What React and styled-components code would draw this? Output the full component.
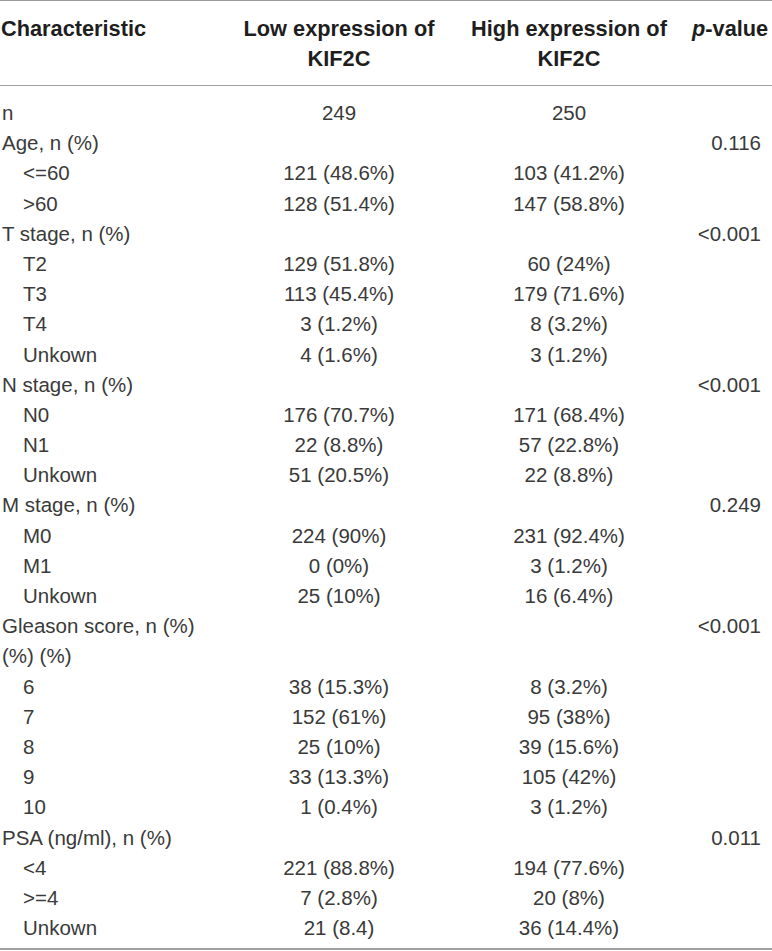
import React from 'react';
import styled, { createGlobalStyle } from 'styled-components';

const GlobalStyle = createGlobalStyle`
  html, body {
    margin: 0;
    padding: 0;
    background: #ffffff;
  }
  body {
    font-family: "Liberation Sans", Arial, Helvetica, sans-serif;
  }
`;

// table frame with the top and bottom rules
const Table = styled.div`
  width: 772px;
  border-top: 1px solid #9a9a9a;
  border-bottom: 2px solid #a0a0a0;
`;

const columns = '230px 218px 242px 1fr';

// header block
const Head = styled.div`
  display: grid;
  grid-template-columns: ${columns};
  padding: 12.5px 0 11.5px;
  border-bottom: 1px solid #a0a0a0;
  margin-bottom: 12px;
`;

const HeadCell = styled.div`
  font-weight: bold;
  font-size: 21.75px;
  line-height: 30px;
  color: #1e1e1e;
  text-align: ${(p) => p.$align || 'left'};
  padding-left: ${(p) => p.$pad || 0}px;
  white-space: nowrap;
`;

const Row = styled.div`
  display: grid;
  grid-template-columns: ${columns};
  height: 30.2px;
  font-size: 20.5px;
  line-height: 30.2px;
  color: #3a3a3a;
`;

const Label = styled.div`
  padding-left: ${(p) => (p.$sub ? 23 : 2)}px;
  white-space: nowrap;
`;

const Value = styled.div`
  text-align: center;
  white-space: nowrap;
`;

const PValue = styled.div`
  text-align: right;
  padding-right: 11px;
  white-space: nowrap;
`;

const Tail = styled.div`
  height: 5px;
`;

const rows = [
  ['n', false, '249', '250', ''],
  ['Age, n (%)', false, '', '', '0.116'],
  ['<=60', true, '121 (48.6%)', '103 (41.2%)', ''],
  ['>60', true, '128 (51.4%)', '147 (58.8%)', ''],
  ['T stage, n (%)', false, '', '', '<0.001'],
  ['T2', true, '129 (51.8%)', '60 (24%)', ''],
  ['T3', true, '113 (45.4%)', '179 (71.6%)', ''],
  ['T4', true, '3 (1.2%)', '8 (3.2%)', ''],
  ['Unkown', true, '4 (1.6%)', '3 (1.2%)', ''],
  ['N stage, n (%)', false, '', '', '<0.001'],
  ['N0', true, '176 (70.7%)', '171 (68.4%)', ''],
  ['N1', true, '22 (8.8%)', '57 (22.8%)', ''],
  ['Unkown', true, '51 (20.5%)', '22 (8.8%)', ''],
  ['M stage, n (%)', false, '', '', '0.249'],
  ['M0', true, '224 (90%)', '231 (92.4%)', ''],
  ['M1', true, '0 (0%)', '3 (1.2%)', ''],
  ['Unkown', true, '25 (10%)', '16 (6.4%)', ''],
  ['Gleason score, n (%)', false, '', '', '<0.001'],
  ['(%) (%)', false, '', '', ''],
  ['6', true, '38 (15.3%)', '8 (3.2%)', ''],
  ['7', true, '152 (61%)', '95 (38%)', ''],
  ['8', true, '25 (10%)', '39 (15.6%)', ''],
  ['9', true, '33 (13.3%)', '105 (42%)', ''],
  ['10', true, '1 (0.4%)', '3 (1.2%)', ''],
  ['PSA (ng/ml), n (%)', false, '', '', '0.011'],
  ['<4', true, '221 (88.8%)', '194 (77.6%)', ''],
  ['>=4', true, '7 (2.8%)', '20 (8%)', ''],
  ['Unkown', true, '21 (8.4)', '36 (14.4%)', ''],
];

export default function App() {
  return (
    <>
      <GlobalStyle />
      <Table>
        <Head>
          <HeadCell $pad={1}>Characteristic</HeadCell>
          <HeadCell $align="center">
            Low expression of
            <br />
            KIF2C
          </HeadCell>
          <HeadCell $align="center">
            High expression of
            <br />
            KIF2C
          </HeadCell>
          <HeadCell $pad={2}>
            <i>p</i>-value
          </HeadCell>
        </Head>
        {rows.map(([label, sub, low, high, p], i) => (
          <Row key={i}>
            <Label $sub={sub}>{label}</Label>
            <Value>{low}</Value>
            <Value>{high}</Value>
            <PValue>{p}</PValue>
          </Row>
        ))}
        <Tail />
      </Table>
    </>
  );
}
